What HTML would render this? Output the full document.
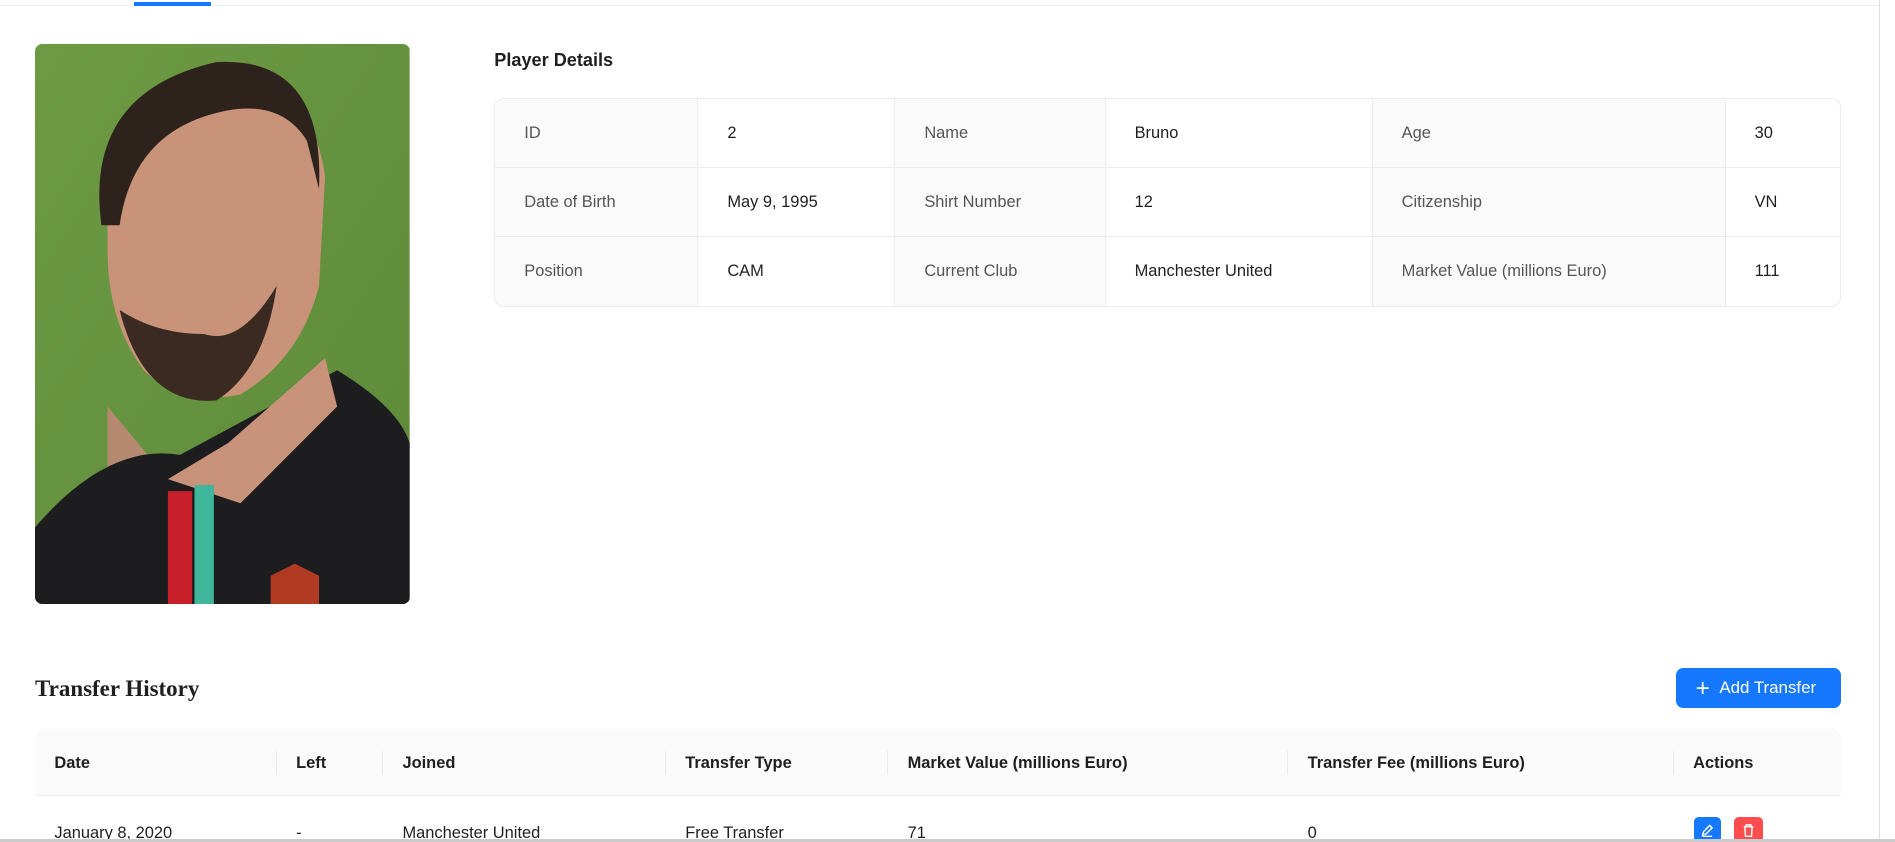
<!DOCTYPE html>
<html><head><meta charset="utf-8"><style>
*{box-sizing:border-box;margin:0;padding:0}
html,body{width:1895px;height:842px;overflow:hidden;background:#fff}
#w{zoom:1.20855;width:1568px;height:697px;position:relative;font-family:"Liberation Sans",sans-serif;font-size:14px;color:#1f1f1f}
.a{position:absolute}
table{border-collapse:separate;border-spacing:0}
.pd{left:409px;top:81px;width:1114px;border:1px solid #ececec;border-radius:8px;overflow:hidden}
.pd td{height:57px;padding:1px 24px 0;border-right:1px solid #ececec;border-bottom:1px solid #ececec;font-size:13.6px}
.pd tr:last-child td{border-bottom:none}
.pd td:last-child{border-right:none}
.pd td.l{background:#fafafa;color:#555}
.th{left:29px;top:603px;width:1494px;height:56px;background:#fafafa;border-radius:8px 8px 0 0;border-bottom:1px solid #eee}
.th span{position:absolute;top:21px;font-weight:bold;font-size:13.6px}
.sep{position:absolute;top:18px;height:20px;width:1px;background:#eaeaea}
.rw span{position:absolute;top:682px;font-size:13.6px}
</style></head><body><div id="w">
<div class="a" style="left:0;top:4px;width:1555px;height:1px;background:#eee"></div>
<div class="a" style="left:111px;top:2px;width:64px;height:3px;background:#1677ff"></div>
<div class="a" style="left:1555px;top:0;width:13px;height:697px;background:#fff;border-left:1px solid #ddd"></div>

<svg class="a" style="left:29px;top:36px;border-radius:6px" width="310" height="464" viewBox="0 0 310 464">
<defs><linearGradient id="g" x1="0" y1="0" x2="1" y2="1"><stop offset="0" stop-color="#6e9a45"/><stop offset="1" stop-color="#5c8a38"/></linearGradient></defs>
<rect width="310" height="464" fill="url(#g)"/>
<path d="M60 300 L110 360 L60 410 Z" fill="#b58a70"/>
<path d="M0 400 Q60 330 120 340 L250 270 Q300 300 310 330 L310 464 L0 464 Z" fill="#1d1d1f"/>
<path d="M110 360 L160 330 L240 260 L250 300 L170 380 Z" fill="#c9927a"/>
<path d="M60 110 Q60 30 150 25 Q230 30 240 110 L235 200 Q220 260 170 290 Q120 300 90 270 Q60 230 60 170 Z" fill="#c89378"/>
<path d="M55 150 Q40 40 150 15 Q240 10 235 120 L225 80 Q200 40 140 60 Q80 80 70 150 Z" fill="#2d221c"/>
<path d="M70 220 Q90 300 150 295 Q190 270 200 200 Q170 250 140 240 Q100 240 70 220 Z" fill="#3a2a22"/>
<rect x="110" y="370" width="20" height="94" fill="#c8202a"/><rect x="132" y="365" width="16" height="99" fill="#3fb59a"/>
<path d="M195 440 L215 430 L235 440 L235 464 L195 464 Z" fill="#b03a22"/>
</svg>

<div class="a" style="left:409px;top:41px;font-weight:bold;font-size:15px">Player Details</div>
<table class="a pd"><colgroup><col style="width:168px"><col style="width:163px"><col style="width:174px"><col style="width:221px"><col style="width:292px"><col></colgroup>
<tr><td class="l">ID</td><td>2</td><td class="l">Name</td><td>Bruno</td><td class="l">Age</td><td>30</td></tr>
<tr><td class="l">Date of Birth</td><td>May 9, 1995</td><td class="l">Shirt Number</td><td>12</td><td class="l">Citizenship</td><td>VN</td></tr>
<tr><td class="l">Position</td><td>CAM</td><td class="l">Current Club</td><td>Manchester United</td><td class="l">Market Value (millions Euro)</td><td>111</td></tr>
</table>

<div class="a" style="left:29px;top:559px;font-family:'Liberation Serif',serif;font-weight:bold;font-size:19px">Transfer History</div>
<div class="a" style="left:1387px;top:553px;width:136px;height:33px;background:#1677ff;border-radius:6px;color:#fff;font-size:14px;line-height:33px;padding-left:16px"><span style="font-size:20px;vertical-align:-2px;margin-right:8px">+</span>Add Transfer</div>

<div class="a th">
<span style="left:16px">Date</span><span style="left:216px">Left</span><span style="left:304px">Joined</span><span style="left:538px">Transfer Type</span><span style="left:722px">Market Value (millions Euro)</span><span style="left:1053px">Transfer Fee (millions Euro)</span><span style="left:1372px">Actions</span>
<div class="sep" style="left:199px"></div><div class="sep" style="left:287px"></div><div class="sep" style="left:521px"></div><div class="sep" style="left:705px"></div><div class="sep" style="left:1036px"></div><div class="sep" style="left:1355px"></div>
</div>
<div class="rw">
<span style="left:45px">January 8, 2020</span><span style="left:245px">-</span><span style="left:333px">Manchester United</span><span style="left:567px">Free Transfer</span><span style="left:751px">71</span><span style="left:1082px">0</span>
</div>
<div class="a" style="left:1402px;top:676px;width:22px;height:22px;background:#1677ff;border-radius:4px"><svg width="22" height="22" viewBox="0 0 22 22"><path d="M7 15 L8 12 L13 7 L15 9 L10 14 Z M7 16 H15" fill="none" stroke="#fff" stroke-width="1.2"/></svg></div>
<div class="a" style="left:1435px;top:676px;width:24px;height:22px;background:#ff4d4f;border-radius:4px"><svg width="24" height="22" viewBox="0 0 24 22"><path d="M8 8 H16 M10 8 V6.5 H14 V8 M9 8 L9.5 16 H14.5 L15 8" fill="none" stroke="#fff" stroke-width="1.2"/></svg></div>
<div class="a" style="left:0;top:694px;width:1568px;height:3px;background:#ccc"></div>
</div></body></html>
